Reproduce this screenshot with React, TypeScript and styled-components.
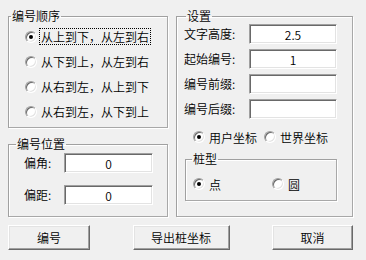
import styled, { createGlobalStyle } from 'styled-components';

const GlobalStyle = createGlobalStyle`
  html, body {
    margin: 0;
    padding: 0;
    background: #f0f0f0;
  }
  body {
    font-family: "Noto Sans CJK SC", "Liberation Sans", sans-serif;
    font-size: 12px;
    font-weight: 350;
    color: #000;
  }
`;

const Dialog = styled.div`
  width: 366px;
  height: 260px;
  box-sizing: border-box;
  padding: 9px 13px 0 8px;
  display: grid;
  grid-template-columns: 160px 177px;
  grid-template-rows: 208px 25px;
  column-gap: 8px;
  row-gap: 8px;
`;

const Column = styled.div`
  display: flex;
  flex-direction: column;
  gap: 9px;
`;

const Group = styled.fieldset<{ $h: number }>`
  margin: 0;
  padding: 0;
  min-width: 0;
  box-sizing: border-box;
  height: ${(p) => p.$h}px;
  border: 1px solid #a0a0a0;
  border-right-color: #a8a8a8;
  border-bottom-color: #a8a8a8;
  box-shadow: 1px 1px 0 #fff, inset 1px 1px 0 #fff;
`;

const Legend = styled.legend<{ $indent: number }>`
  padding: 0 1px;
  margin-left: ${(p) => p.$indent}px;
  line-height: 14px;
  font-size: 12px;
`;

const RadioList = styled.div`
  display: flex;
  flex-direction: column;
  padding: 1px 0 0 16px;
`;

const RadioRow = styled.label<{ $h?: number }>`
  display: flex;
  align-items: center;
  height: ${(p) => p.$h ?? 25}px;
  white-space: nowrap;
`;

const Dot = styled.span<{ $on?: boolean }>`
  flex: none;
  width: 12px;
  height: 12px;
  box-sizing: border-box;
  border-radius: 50%;
  background: #fff;
  border: 1px solid;
  border-color: #a0a0a0 #fff #fff #a0a0a0;
  box-shadow: inset 1px 1px 0 #696969, inset -1px -1px 0 #e3e3e3;
  display: grid;
  place-items: center;

  &::after {
    content: '';
    width: 4px;
    height: 4px;
    border-radius: 50%;
    background: ${(p) => (p.$on ? '#000' : 'transparent')};
  }
`;

const RadioText = styled.span<{ $focus?: boolean }>`
  margin-left: 3px;
  padding: 0 1px;
  line-height: 15px;
  outline: ${(p) => (p.$focus ? '1px dotted #000' : 'none')};
`;

const Fields = styled.div`
  display: flex;
  flex-direction: column;
  padding: 1px 0 0 7px;
`;

const FieldRow = styled.div<{ $label: number; $h: number }>`
  display: grid;
  grid-template-columns: ${(p) => p.$label}px auto;
  align-items: start;
  height: ${(p) => p.$h}px;
`;

const FieldLabel = styled.span`
  height: 20px;
  line-height: 20px;
  white-space: nowrap;
`;

const TextBox = styled.input<{ $w: number }>`
  width: ${(p) => p.$w}px;
  height: 20px;
  box-sizing: border-box;
  margin: 0;
  padding: 0;
  background: #fff;
  border: 1px solid;
  border-color: #a0a0a0 #fff #fff #a0a0a0;
  box-shadow: inset 1px 1px 0 #696969, inset -1px -1px 0 #e3e3e3;
  font: inherit;
  text-align: center;
  color: #000;
  outline: none;
`;

const OffsetFields = styled.div`
  display: flex;
  flex-direction: column;
  gap: 12px;
  padding: 2px 0 0 15px;
`;

const CoordRow = styled.div`
  display: grid;
  grid-template-columns: 71px auto;
  padding-left: 16px;
`;

const PileGroup = styled(Group)`
  width: 152px;
  margin: 2px 0 0 8px;
`;

const PileRow = styled.div`
  display: grid;
  grid-template-columns: 79px auto;
  align-items: center;
  padding: 10px 0 0 7px;
`;

const ButtonBar = styled.div`
  grid-column: 1 / span 2;
  display: flex;
  justify-content: space-between;
`;

const Button = styled.button<{ $w: number }>`
  width: ${(p) => p.$w}px;
  height: 25px;
  box-sizing: border-box;
  margin: 0;
  padding: 0;
  background: #f0f0f0;
  border: 1px solid;
  border-color: #fff #696969 #696969 #fff;
  box-shadow: inset -1px -1px 0 #a0a0a0, inset 1px 1px 0 #e3e3e3;
  font: inherit;
  color: #000;
`;

function Radio({ label, on, focus, h }: { label: string; on?: boolean; focus?: boolean; h?: number }) {
  return (
    <RadioRow $h={h}>
      <Dot $on={on} />
      <RadioText $focus={focus}>{label}</RadioText>
    </RadioRow>
  );
}

const orders = ['从上到下，从左到右', '从下到上，从左到右', '从右到左，从上到下', '从右到左，从下到上'];

const settings = [
  { label: '文字高度:', value: '2.5' },
  { label: '起始编号:', value: '1' },
  { label: '编号前缀:', value: '' },
  { label: '编号后缀:', value: '' },
];

export default function App() {
  return (
    <>
      <GlobalStyle />
      <Dialog>
        <Column>
          <Group $h={119}>
            <Legend $indent={2}>编号顺序</Legend>
            <RadioList>
              {orders.map((o, i) => (
                <Radio key={o} label={o} on={i === 0} focus={i === 0} />
              ))}
            </RadioList>
          </Group>
          <Group $h={80}>
            <Legend $indent={7}>编号位置</Legend>
            <OffsetFields>
              <FieldRow $label={40} $h={20}>
                <FieldLabel>偏角:</FieldLabel>
                <TextBox $w={89} defaultValue="0" />
              </FieldRow>
              <FieldRow $label={40} $h={20}>
                <FieldLabel>偏距:</FieldLabel>
                <TextBox $w={89} defaultValue="0" />
              </FieldRow>
            </OffsetFields>
          </Group>
        </Column>

        <Group $h={208}>
          <Legend $indent={9}>设置</Legend>
          <Fields>
            {settings.map((s) => (
              <FieldRow key={s.label} $label={65} $h={25}>
                <FieldLabel>{s.label}</FieldLabel>
                <TextBox $w={88} defaultValue={s.value} />
              </FieldRow>
            ))}
          </Fields>
          <CoordRow>
            <Radio label="用户坐标" on h={26} />
            <Radio label="世界坐标" h={26} />
          </CoordRow>
          <PileGroup $h={49}>
            <Legend $indent={6}>桩型</Legend>
            <PileRow>
              <Radio label="点" on h={16} />
              <Radio label="圆" h={16} />
            </PileRow>
          </PileGroup>
        </Group>

        <ButtonBar>
          <Button $w={82}>编号</Button>
          <Button $w={97}>导出桩坐标</Button>
          <Button $w={81}>取消</Button>
        </ButtonBar>
      </Dialog>
    </>
  );
}
